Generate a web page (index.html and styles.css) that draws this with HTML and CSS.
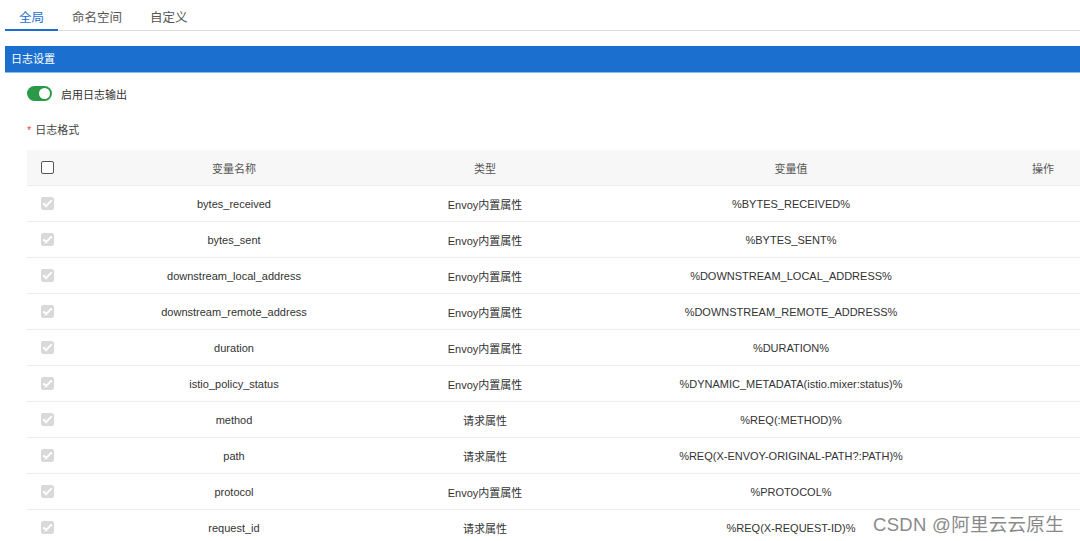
FILE: index.html
```html
<!DOCTYPE html>
<html>
  <head>
	<title>日志设置</title>
	<meta charset="UTF-8">
	<link rel="stylesheet" href="styles.css">
  </head>
  <body>
	<div class="tabs">
		<div class="tab active">全局</div>
		<div class="tab">命名空间</div>
		<div class="tab">自定义</div>
	</div>

	<div class="section-bar">日志设置</div>

	<div class="content">
		<div class="switch-row">
			<span class="switch"><span class="knob"></span></span>
			<span>启用日志输出</span>
		</div>

		<div class="field-label"><span class="req">*</span>日志格式</div>

		<table class="grid">
			<colgroup>
				<col class="c-check">
				<col class="c-name">
				<col class="c-type">
				<col class="c-value">
				<col class="c-op">
			</colgroup>
			<thead>
				<tr>
					<th><span class="box"></span></th>
					<th>变量名称</th>
					<th>类型</th>
					<th>变量值</th>
					<th>操作</th>
				</tr>
			</thead>
			<tbody>
				<tr><td><span class="box on"></span></td><td>bytes_received</td><td>Envoy内置属性</td><td>%BYTES_RECEIVED%</td><td></td></tr>
				<tr><td><span class="box on"></span></td><td>bytes_sent</td><td>Envoy内置属性</td><td>%BYTES_SENT%</td><td></td></tr>
				<tr><td><span class="box on"></span></td><td>downstream_local_address</td><td>Envoy内置属性</td><td>%DOWNSTREAM_LOCAL_ADDRESS%</td><td></td></tr>
				<tr><td><span class="box on"></span></td><td>downstream_remote_address</td><td>Envoy内置属性</td><td>%DOWNSTREAM_REMOTE_ADDRESS%</td><td></td></tr>
				<tr><td><span class="box on"></span></td><td>duration</td><td>Envoy内置属性</td><td>%DURATION%</td><td></td></tr>
				<tr><td><span class="box on"></span></td><td>istio_policy_status</td><td>Envoy内置属性</td><td>%DYNAMIC_METADATA(istio.mixer:status)%</td><td></td></tr>
				<tr><td><span class="box on"></span></td><td>method</td><td>请求属性</td><td>%REQ(:METHOD)%</td><td></td></tr>
				<tr><td><span class="box on"></span></td><td>path</td><td>请求属性</td><td>%REQ(X-ENVOY-ORIGINAL-PATH?:PATH)%</td><td></td></tr>
				<tr><td><span class="box on"></span></td><td>protocol</td><td>Envoy内置属性</td><td>%PROTOCOL%</td><td></td></tr>
				<tr><td><span class="box on"></span></td><td>request_id</td><td>请求属性</td><td>%REQ(X-REQUEST-ID)%</td><td></td></tr>
			</tbody>
		</table>
	</div>

	<div class="watermark">CSDN @阿里云云原生</div>
  </body>
</html>
```

FILE: styles.css
```css
html, body {
	margin: 0;
	padding: 0;
	background: #fff;
	overflow: hidden;
}

body {
	width: 1080px;
	height: 541px;
	font-family: "Liberation Sans", "Noto Sans CJK SC", sans-serif;
	font-size: 11px;
	color: #333;
	position: relative;
}

.tabs {
	display: flex;
	margin-left: 5px;
	border-bottom: 1px solid #dcdcdc;
	height: 31px;
	box-sizing: border-box;
}

.tab {
	padding: 7px 14px 0 14px;
	font-size: 12.5px;
	color: #555;
	white-space: nowrap;
	box-sizing: border-box;
}

.tab.active {
	color: #1b6fd0;
	border-bottom: 2px solid #1b6fd0;
	height: 31px;
	margin-bottom: -1px;
}

.section-bar {
	margin: 15px 0 0 5px;
	height: 26px;
	line-height: 27px;
	background: #1b6fcf;
	color: #fff;
	padding-left: 6px;
	font-size: 11px;
	border-bottom: 1px solid #8cbcec;
}

.content {
	padding-left: 27px;
}

.switch-row {
	display: flex;
	align-items: center;
	gap: 9px;
	margin-top: 13px;
	height: 15px;
}

.switch {
	display: inline-block;
	width: 25px;
	height: 15px;
	border-radius: 8px;
	background: #2a9a48;
	position: relative;
}

.switch .knob {
	position: absolute;
	right: 2px;
	top: 2px;
	width: 11px;
	height: 11px;
	border-radius: 50%;
	background: #fff;
}

.field-label {
	margin-top: 22px;
	height: 15px;
	line-height: 15px;
	color: #444;
}

.req {
	color: #e5484d;
	margin-right: 4px;
}

.grid {
	margin-top: 12px;
	border-collapse: collapse;
	table-layout: fixed;
	width: 1053px;
}

.c-check { width: 47px; }
.c-name { width: 320px; }
.c-type { width: 182px; }
.c-value { width: 430px; }
.c-op { width: 74px; }

.grid th {
	background: #f7f7f7;
	font-weight: normal;
	color: #555;
	height: 35px;
	text-align: center;
	padding: 0;
	border-bottom: 1px solid #ececec;
}

.grid td {
	height: 35px;
	text-align: center;
	padding: 0;
	border-bottom: 1px solid #ececec;
}

.grid th:first-child,
.grid td:first-child {
	text-align: left;
	padding-left: 14px;
}

.box {
	display: inline-block;
	width: 11px;
	height: 11px;
	border: 1px solid #555;
	border-radius: 2px;
	vertical-align: middle;
	position: relative;
	background: #fff;
}

.box.on {
	background: #d9d9d9;
	border-color: #d9d9d9;
}

.box.on::after {
	content: "";
	position: absolute;
	left: 3px;
	top: 0px;
	width: 3px;
	height: 7px;
	border: solid #fff;
	border-width: 0 2px 2px 0;
	transform: rotate(45deg);
}

.watermark {
	position: absolute;
	left: 873px;
	top: 510px;
	font-size: 18.5px;
	color: #8a8a8a;
	text-shadow: 0 0 2px #fff;
	letter-spacing: 0.3px;
}
```
